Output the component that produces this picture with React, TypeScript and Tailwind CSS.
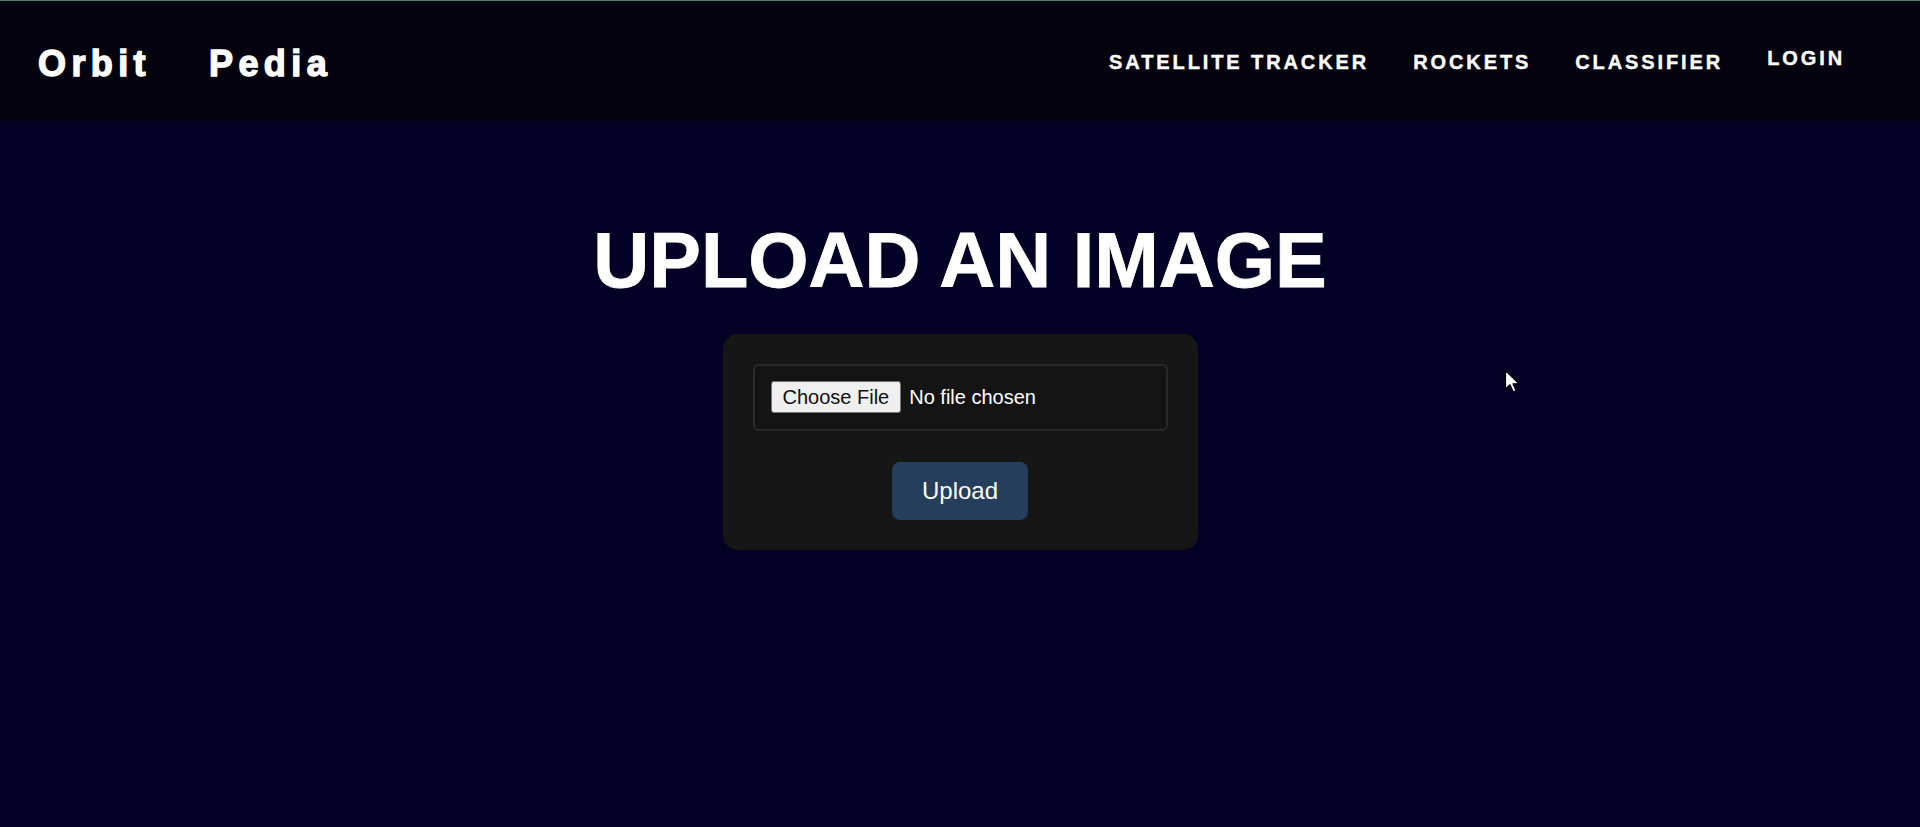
import { useState } from 'react'

const NAV_LINKS = ['SATELLITE TRACKER', 'ROCKETS', 'CLASSIFIER']

function Cursor() {
  return (
    <svg
      className="pointer-events-none absolute left-[1504px] top-[369px]"
      width="18"
      height="26"
      viewBox="0 0 18 26"
    >
      <path
        d="M1.5 1.5 L1.5 20 L6 15.8 L9.2 23 L12 21.8 L9 14.8 L15 14.8 Z"
        fill="#ffffff"
        stroke="#000000"
        strokeWidth="1.2"
        strokeLinejoin="round"
      />
    </svg>
  )
}

export default function App() {
  const [fileName, setFileName] = useState<string | null>(null)

  return (
    <div className="relative min-h-screen bg-[#040025] font-['Liberation_Sans',Arial,sans-serif] text-white">
      {/* Header */}
      <header className="flex h-[121px] items-center justify-between border-t border-[#4f7d6d] bg-[#03020e] pl-[38px] pr-[75px]">
        <a
          href="#"
          className="mt-[5px] flex items-center text-[36px] leading-none font-bold tracking-[5.4px] text-white [-webkit-text-stroke:1.4px_#ffffff]"
        >
          <span>Orbit</span>
          <span className="ml-[58px]">Pedia</span>
        </a>
        <nav className="flex items-center gap-[44px]">
          {NAV_LINKS.map((label) => (
            <a
              key={label}
              href="#"
              className="mt-[2px] text-[20px] leading-none font-bold tracking-[2.9px] text-white [-webkit-text-stroke:0.4px_#ffffff]"
            >
              {label}
            </a>
          ))}
          <button className="mb-[6px] text-[20px] leading-none font-bold tracking-[2.9px] text-white [-webkit-text-stroke:0.4px_#ffffff]">
            LOGIN
          </button>
        </nav>
      </header>

      {/* Upload */}
      <main className="flex flex-col items-center pt-[101px]">
        <h1 className="mb-[34px] text-[77.5px] leading-none font-bold text-white [-webkit-text-stroke:0.8px_#ffffff]">
          UPLOAD AN IMAGE
        </h1>

        <form
          className="flex w-[475px] flex-col items-center gap-[31px] rounded-[15px] bg-[#161616] p-[30px]"
          onSubmit={(e) => e.preventDefault()}
        >
          <label className="flex h-[67px] w-full cursor-pointer items-center gap-[8px] rounded-[6px] border-2 border-[#2a2a2a] bg-[#141414] px-[16px] text-[20px]">
            <span className="flex h-[32px] items-center rounded-[3px] border border-[#767676] bg-[#efefef] px-[11px] text-[#111111]">
              Choose File
            </span>
            <span className="text-white">{fileName ?? 'No file chosen'}</span>
            <input
              type="file"
              accept="image/*"
              className="hidden"
              onChange={(e) => setFileName(e.target.files?.[0]?.name ?? null)}
            />
          </label>

          <button
            type="submit"
            className="h-[58px] rounded-[8px] bg-[#243e5b] px-[30px] text-[24px] text-white"
          >
            Upload
          </button>
        </form>
      </main>

      <Cursor />
    </div>
  )
}
